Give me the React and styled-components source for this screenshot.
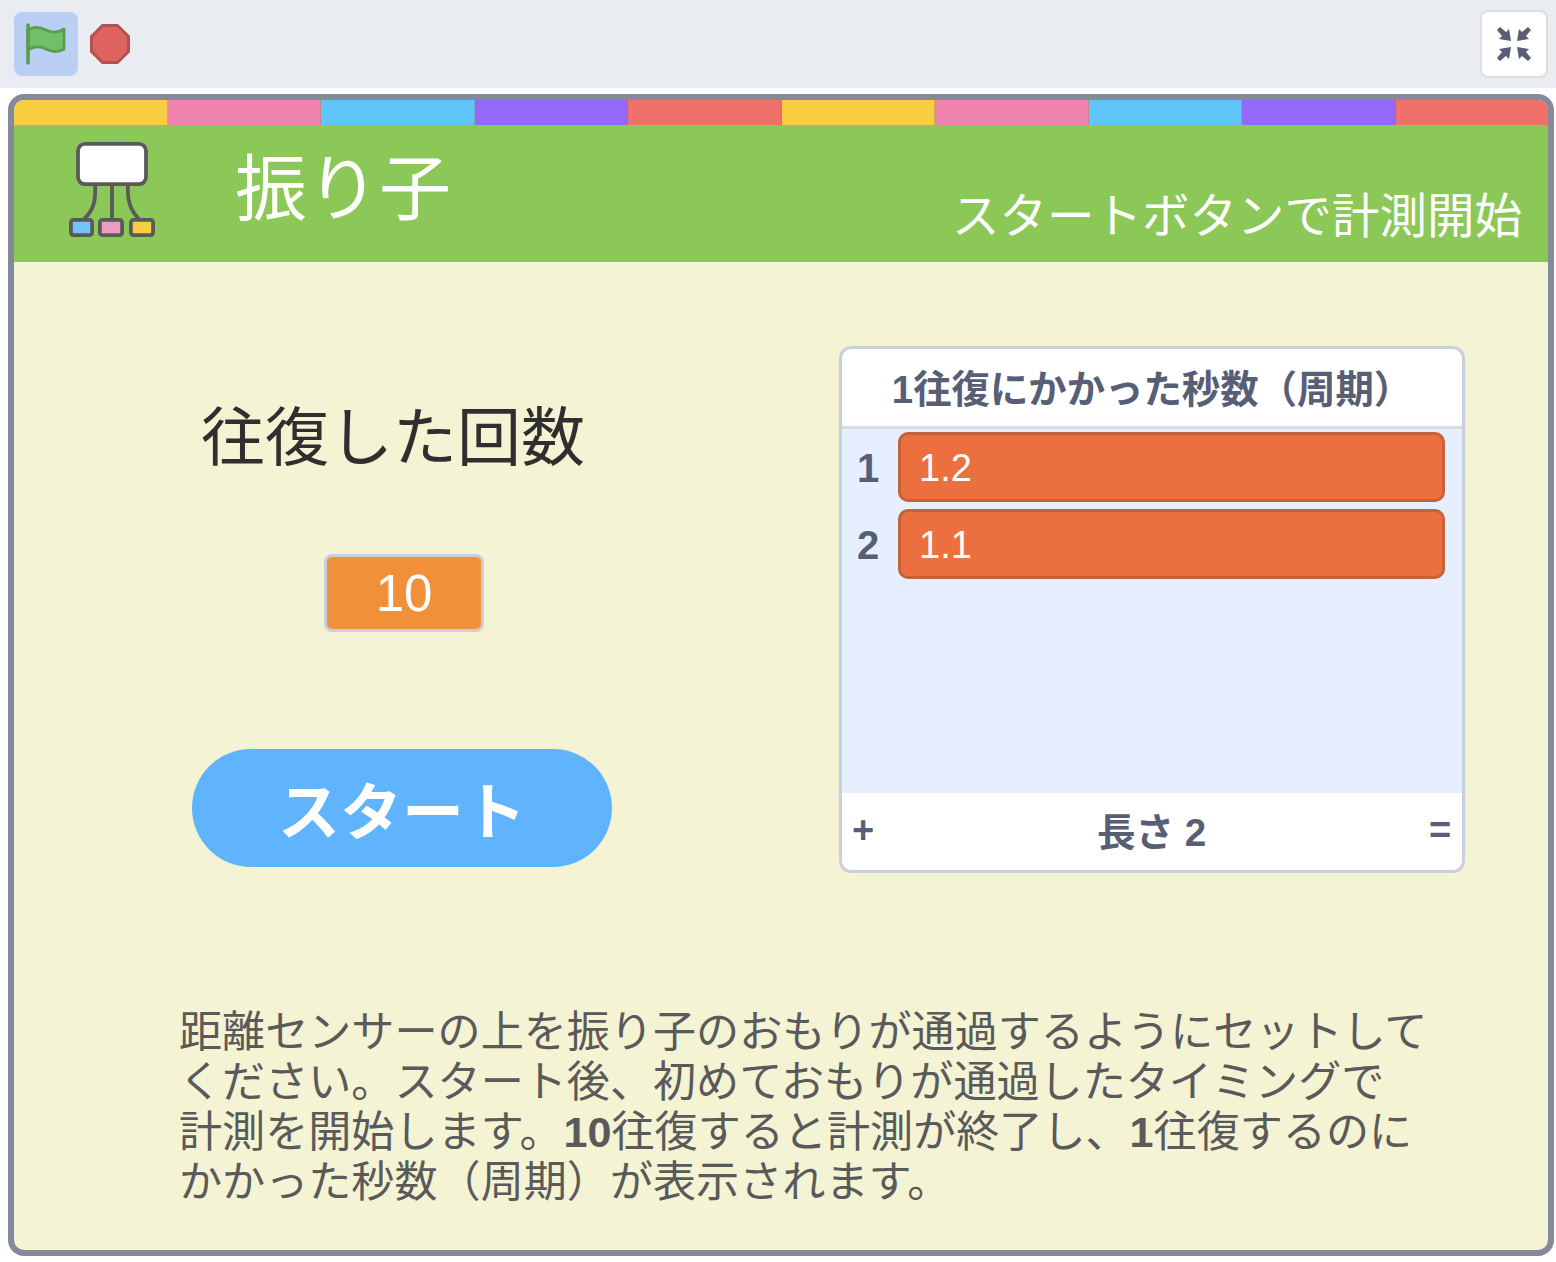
import React from "react";
import styled, { createGlobalStyle } from "styled-components";

const Global = createGlobalStyle`
  html, body { margin: 0; padding: 0; background: #fff; }
  body { font-family: "Liberation Sans", "Noto Sans CJK JP", sans-serif; }
  * { box-sizing: border-box; }
`;

const Page = styled.div`
  width: 1556px;
  height: 1262px;
  display: flex;
  flex-direction: column;
`;
const Toolbar = styled.header`
  height: 88px;
  background: #e9ecf1;
  display: flex;
  align-items: center;
  padding: 0 8px 0 14px;
  flex: none;
`;
const FlagButton = styled.div`
  width: 64px;
  height: 64px;
  border-radius: 8px;
  background: #b9cff4;
  display: flex;
  align-items: center;
  justify-content: center;
`;
const StopButton = styled.div`
  width: 40px;
  height: 40px;
  margin-left: 12px;
  display: flex;
`;
const ScreenButton = styled.div`
  width: 68px;
  height: 68px;
  margin-left: auto;
  border: 2px solid #dcdee2;
  border-radius: 8px;
  background: #fff;
  display: flex;
  align-items: center;
  justify-content: center;
`;
const Stage = styled.main`
  margin: 6px 2px 0 8px;
  height: 1162px;
  border: 6px solid #858a9b;
  border-radius: 16px;
  overflow: hidden;
  display: flex;
  flex-direction: column;
  background: #f4f3d4;
`;
const Stripe = styled.div`
  height: 25px;
  display: flex;
  flex: none;
`;
const StripeCell = styled.div`
  flex: 1;
  background: ${(p) => p.$color};
  border-right: 1px solid rgba(120, 120, 100, 0.35);
  &:last-child { border-right: 0; }
`;
const Banner = styled.div`
  height: 137px;
  flex: none;
  background: #8cc858;
  display: flex;
`;
const LogoSlot = styled.div`
  width: 90px;
  height: 100px;
  margin: 15px 0 0 52px;
  flex: none;
`;
const BannerTitle = styled.h1`
  margin: 19px 0 0 79px;
  font-size: 72px;
  line-height: 90px;
  font-weight: 400;
  color: #fff;
`;
const BannerHint = styled.div`
  margin: 60px 26px 0 auto;
  font-size: 47.5px;
  line-height: 64px;
  color: #fff;
  white-space: nowrap;
`;
const Content = styled.div`
  flex: 1;
  display: flex;
  flex-direction: column;
`;
const Columns = styled.div`
  display: flex;
  height: 527px;
  margin-top: 84px;
  flex: none;
`;
const LeftColumn = styled.div`
  width: 825px;
  flex: none;
  display: flex;
  flex-direction: column;
  align-items: flex-start;
`;
const CountTitle = styled.h2`
  margin: 46px 0 0 187px;
  font-size: 64px;
  line-height: 92px;
  font-weight: 400;
  color: #2f2f2f;
  white-space: nowrap;
`;
const CountBox = styled.div`
  margin: 70px 0 0 310px;
  width: 160px;
  height: 78px;
  border: 3px solid #c8cfdf;
  border-radius: 8px;
  background: #f0913a;
  color: #fff;
  font-size: 51px;
  display: flex;
  align-items: center;
  justify-content: center;
`;
const StartButton = styled.button`
  margin: 117px 0 0 178px;
  width: 420px;
  height: 118px;
  border: 0;
  border-radius: 59px;
  background: #60b3fd;
  color: #fff;
  font-family: inherit;
  font-size: 62px;
  font-weight: 700;
  padding: 0;
`;
const ListMonitor = styled.section`
  width: 626px;
  height: 527px;
  border: 3px solid #c8cfdf;
  border-radius: 12px;
  background: #fff;
  overflow: hidden;
  display: flex;
  flex-direction: column;
  color: #575e75;
`;
const ListHeader = styled.div`
  height: 80px;
  flex: none;
  border-bottom: 3px solid #dcdcdc;
  padding-bottom: 4px;
  font-size: 38.4px;
  font-weight: 700;
  display: flex;
  align-items: center;
  justify-content: center;
  white-space: nowrap;
`;
const ListBody = styled.div`
  flex: 1;
  background: #e5effe;
  padding: 3px 17px 0 0;
  display: flex;
  flex-direction: column;
  gap: 7px;
`;
const ListRow = styled.div`
  display: flex;
  align-items: center;
  height: 70px;
`;
const RowIndex = styled.div`
  width: 52px;
  margin-right: 4px;
  padding-top: 2px;
  flex: none;
  font-size: 40px;
  font-weight: 700;
  text-align: center;
`;
const RowValue = styled.div`
  flex: 1;
  height: 70px;
  border: 3px solid #c4623a;
  border-radius: 10px;
  background: #eb6f3f;
  color: #fff;
  font-size: 38px;
  display: flex;
  align-items: center;
  padding: 2px 0 0 18px;
`;
const ListFooter = styled.div`
  height: 77px;
  flex: none;
  display: flex;
  align-items: center;
  justify-content: space-between;
  padding: 0 10px 2px 9px;
  font-weight: 700;
`;
const FooterSign = styled.span`
  font-size: 38px;
  line-height: 1;
  width: 24px;
  margin-top: -2px;
  text-align: center;
`;
const FooterLength = styled.span`
  font-size: 38.5px;
  margin-top: -4px;
`;
const Note = styled.p`
  margin: 134px 0 0 165px;
  width: 1300px;
  font-size: 43.1px;
  line-height: 50px;
  color: #5a5a5a;
  white-space: pre-line;
`;
const NoteNumber = styled.b`
  font-weight: 700;
  margin-left: 1px;
`;

const colors = ["#f9cd41", "#f083ac", "#60c6fa", "#9468f8", "#f0706a"];

const Flag = () => (
  <svg width="42" height="42" viewBox="0 0 42 42">
    <path
      d="M3 7 C9 3 15 4 21 7 S33 10 39 6 V26 C33 30 27 29 21 26 S9 23 3 27 Z"
      fill="#6fc066"
      stroke="#5a9c50"
      strokeWidth="2.8"
      strokeLinejoin="round"
    />
    <path d="M3 2 V40" stroke="#5a9c50" strokeWidth="3.6" strokeLinecap="round" fill="none" />
  </svg>
);

const Stop = () => (
  <svg width="40" height="40" viewBox="0 0 40 40">
    <polygon
      points="12.5,1.5 27.5,1.5 38.5,12.5 38.5,27.5 27.5,38.5 12.5,38.5 1.5,27.5 1.5,12.5"
      fill="#de625f"
      stroke="#b25250"
      strokeWidth="3"
      strokeLinejoin="round"
    />
  </svg>
);

const Shrink = () => (
  <svg width="34" height="34" viewBox="0 0 34 34" fill="#575e75">
    <path d="M0 3 L3 0 L9 5 L12 2 L14 14 L2 12 L5 9 Z" />
    <path d="M34 3 L31 0 L25 5 L22 2 L20 14 L32 12 L29 9 Z" />
    <path d="M0 31 L3 34 L9 29 L12 32 L14 20 L2 22 L5 25 Z" />
    <path d="M34 31 L31 34 L25 29 L22 32 L20 20 L32 22 L29 25 Z" />
  </svg>
);

const Logo = () => (
  <svg width="90" height="100" viewBox="0 0 90 100">
    <g fill="none" stroke="#5a5a5a" strokeWidth="3.8">
      <path d="M29 44 C30 60 28 70 18 79" />
      <path d="M46 44 V80" />
      <path d="M62 44 C61 60 64 70 73 79" />
    </g>
    <rect x="12" y="3.9" width="68" height="40.2" rx="7" fill="#fff" stroke="#5a5a5a" strokeWidth="3.8" />
    <rect x="4.9" y="79.9" width="21.2" height="15.2" rx="2.5" fill="#72c4fa" stroke="#5a5a5a" strokeWidth="3.8" />
    <rect x="33.9" y="79.9" width="22.2" height="15.2" rx="2.5" fill="#ee9cc4" stroke="#5a5a5a" strokeWidth="3.8" />
    <rect x="64.9" y="79.9" width="22.2" height="15.2" rx="2.5" fill="#f9cd41" stroke="#5a5a5a" strokeWidth="3.8" />
  </svg>
);

export default function App() {
  return (
    <Page>
      <Global />
      <Toolbar>
        <FlagButton><Flag /></FlagButton>
        <StopButton><Stop /></StopButton>
        <ScreenButton><Shrink /></ScreenButton>
      </Toolbar>
      <Stage>
        <Stripe>
          {[...colors, ...colors].map((c, i) => (
            <StripeCell key={i} $color={c} />
          ))}
        </Stripe>
        <Banner>
          <LogoSlot><Logo /></LogoSlot>
          <BannerTitle>振り子</BannerTitle>
          <BannerHint>スタートボタンで計測開始</BannerHint>
        </Banner>
        <Content>
          <Columns>
            <LeftColumn>
              <CountTitle>往復した回数</CountTitle>
              <CountBox>10</CountBox>
              <StartButton>スタート</StartButton>
            </LeftColumn>
            <ListMonitor>
              <ListHeader>1往復にかかった秒数（周期）</ListHeader>
              <ListBody>
                <ListRow>
                  <RowIndex>1</RowIndex>
                  <RowValue>1.2</RowValue>
                </ListRow>
                <ListRow>
                  <RowIndex>2</RowIndex>
                  <RowValue>1.1</RowValue>
                </ListRow>
              </ListBody>
              <ListFooter>
                <FooterSign>+</FooterSign>
                <FooterLength>長さ 2</FooterLength>
                <FooterSign>=</FooterSign>
              </ListFooter>
            </ListMonitor>
          </Columns>
          <Note>
            {"距離センサーの上を振り子のおもりが通過するようにセットして\nください。スタート後、初めておもりが通過したタイミングで\n計測を開始します。"}
            <NoteNumber>10</NoteNumber>
            {"往復すると計測が終了し、"}
            <NoteNumber>1</NoteNumber>
            {"往復するのに\nかかった秒数（周期）が表示されます。"}
          </Note>
        </Content>
      </Stage>
    </Page>
  );
}
